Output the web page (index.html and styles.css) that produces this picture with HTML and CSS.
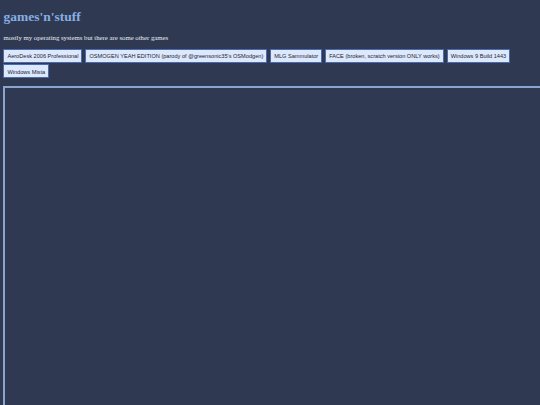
FILE: index.html
```html
<!DOCTYPE html>
<html>
<head>
<meta charset="utf-8">
<title>games'n'stuff</title>
<link rel="stylesheet" href="styles.css">
</head>
<body>
<h1 class="title">games'n'stuff</h1>
<p class="subtitle">mostly my operating systems but there are some other games</p>
<div class="games">
  <button class="game">AeroDesk 2006 Professional</button>
  <button class="game">OSMOGEN YEAH EDITION (parody of @greensonic35's OSModgen)</button>
  <button class="game">MLG Sammulator</button>
  <button class="game">FACE (broken, scratch version ONLY works)</button>
  <button class="game">Windows 9 Build 1443</button>
  <button class="game">Windows Mista</button>
</div>
<div class="frame"></div>
</body>
</html>
```
FILE: styles.css
```css
html, body {
  overflow: hidden;
}
html {
  background: #2f3a52;
  height: 100%;
}
body {
  margin: 0;
  padding: 0 0 0 3.4px;
  height: 100%;
  box-sizing: border-box;
  display: flex;
  flex-direction: column;
  background: #2f3a52;
  font-family: "Liberation Serif", "Times New Roman", serif;
  color: #e6ebf5;
}
.title {
  font-size: 13.5px;
  font-weight: bold;
  color: #86aee4;
  margin: 9px 0;
  line-height: 15.5px;
}
.subtitle {
  font-size: 6.75px;
  line-height: 7.8px;
  margin: 0 0 7.4px;
  color: #e8ecf4;
}
.games {
  display: flex;
  flex-wrap: wrap;
  gap: 1.7px 3px;
  width: 520px;
}
.game {
  font-family: "Liberation Sans", Arial, sans-serif;
  font-size: 5.62px;
  line-height: 6.5px;
  padding: 3.2px 3px;
  background: #dce8fc;
  color: #1d2433;
  border: 1px solid #4a6aad;
  border-radius: 0;
  margin: 0;
  height: 14px;
}
.frame {
  margin-top: 7.7px;
  flex: 1;
  border: 2px solid #8aa3cf;
  border-right: 0;
  border-bottom: 0;
}
```
